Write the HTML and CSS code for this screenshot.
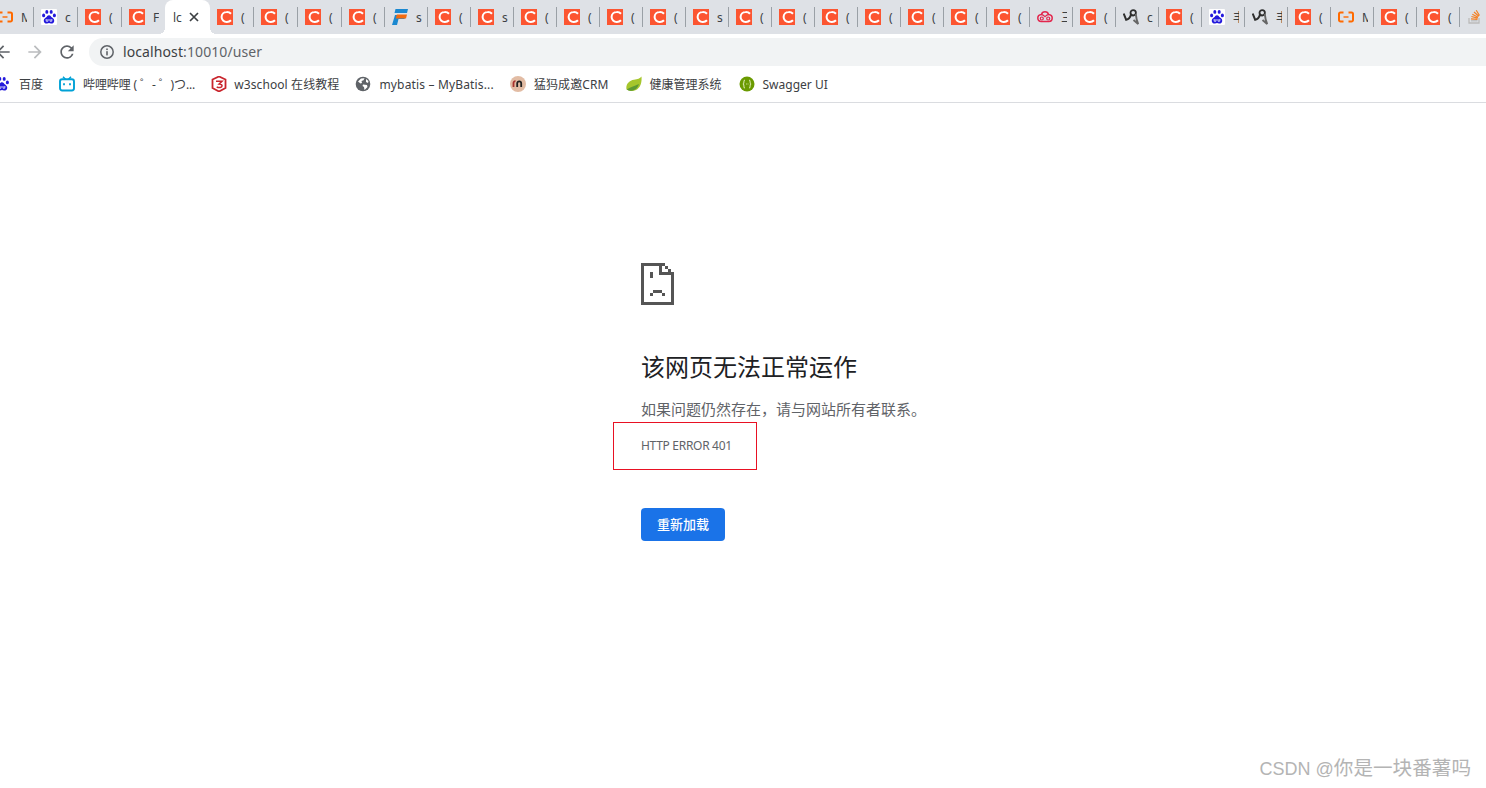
FILE: index.html
```html
<!DOCTYPE html>
<html lang="zh-CN">
<head>
    <meta charset="UTF-8">
    <title>localhost:10010/user</title>
    <link rel="stylesheet" href="styles.css">
</head>
<body>

    <!-- Shared favicons -->
    <svg class="icon-defs" aria-hidden="true">
        <symbol id="i-csdn" viewBox="0 0 16 16">
            <rect width="16" height="16" fill="#fc5531"/>
            <path d="M14 4.800A5.600 5.600 0 0 0 9.600 3a5 5 0 1 0 0 10 5.600 5.600 0 0 0 4.400-1.800" fill="none" stroke="#fff" stroke-width="2"/>
        </symbol>
        <symbol id="i-baidu" viewBox="0 0 16 16">
            <rect width="16" height="16" rx="1" fill="#fff"/>
            <g fill="#2319dc">
                <ellipse cx="5.800" cy="2.900" rx="1.500" ry="1.900"/>
                <ellipse cx="10.200" cy="2.900" rx="1.500" ry="1.900"/>
                <ellipse cx="2.600" cy="6.400" rx="1.500" ry="1.900"/>
                <ellipse cx="13.400" cy="6.400" rx="1.500" ry="1.900"/>
                <path d="M8 6.200c1.500 0 2 1.500 3.100 2.400 1.300 1 2.400 2 2.100 3.600-.3 1.700-1.700 2.500-3.200 2.300-.8-.1-1.300-.4-2-.4s-1.200.3-2 .4c-1.500.2-2.900-.6-3.200-2.300-.3-1.600.8-2.600 2.100-3.600C5.900 7.700 6.500 6.200 8 6.200z"/>
            </g>
            <path d="M5.200 10v2.200h1.800V10M9 10v2.200h1.800V10" fill="none" stroke="#fff" stroke-width=".8"/>
        </symbol>
        <symbol id="i-ali" viewBox="0 0 16 16">
            <path d="M5.500 3.500H2.500A1.500 1.500 0 0 0 1 5v6a1.500 1.500 0 0 0 1.500 1.500h3M10.500 3.500h3A1.500 1.500 0 0 1 15 5v6a1.500 1.500 0 0 1-1.500 1.500h-3" fill="none" stroke="#ff6a00" stroke-width="2"/>
            <rect x="5.500" y="7.300" width="5" height="1.400" fill="#ff6a00"/>
        </symbol>
        <symbol id="i-fast" viewBox="0 0 16 16">
            <path d="M3.500 0H16l-1 4H2.500z" fill="#1b88d0"/>
            <path d="M3 6h10.500l-1 4H6.500L5 16H0z" fill="#1b88d0"/>
            <path d="M4.800 5.500H15l-1 4H3.800z" fill="#f26b10"/>
        </symbol>
        <symbol id="i-cloud" viewBox="0 0 16 16">
            <path d="M4.500 5.500a3.600 3.600 0 0 1 7 0c2 .2 3.700 1.300 3.700 3.500 0 2.300-1.500 3.500-3.400 3.500H4.200C2.300 12.500.8 11.300.8 9c0-2.200 1.700-3.300 3.700-3.500z" fill="none" stroke="#e2264d" stroke-width="1.500"/>
            <path d="M4.500 5.700c1.500 0 2.500 1 3.500 2 1-1 2-2 3.500-2" fill="none" stroke="#e2264d" stroke-width="1.200"/>
            <circle cx="4.800" cy="9.500" r="1.500" fill="none" stroke="#e2264d" stroke-width="1.200"/>
            <circle cx="11.200" cy="9.500" r="1.500" fill="none" stroke="#e2264d" stroke-width="1.200"/>
        </symbol>
        <symbol id="i-scribble" viewBox="0 0 16 16">
            <path d="M.7 4.500 3.200 10.800c2.700-.5 4.300-3 5-6" fill="none" stroke="#2e2e2e" stroke-width="2"/>
            <circle cx="10.200" cy="3.800" r="2.700" fill="none" stroke="#2e2e2e" stroke-width="1.800"/>
            <path d="M12.800 5c.3 3.300.8 6.500 2.400 10L10.500 11" fill="none" stroke="#666" stroke-width="1.900"/>
        </symbol>
        <symbol id="i-stack" viewBox="0 0 16 16">
            <path d="M2 9v5h10V9" fill="none" stroke="#bcbbbb" stroke-width="1.300"/>
            <path d="M4 11.800h6.500" stroke="#bcbbbb" stroke-width="1.200"/>
            <path d="M4 9.800l6.500.6M4.400 7.500l6.300 1.700M5.300 5.200l5.800 3M7 3l4.800 4.300M9.200 1.200l3.300 5.300" stroke="#f48024" stroke-width="1.200" fill="none"/>
        </symbol>
    </svg>

    <!-- Browser chrome -->
    <header class="browser">
        <div class="tabstrip">
            <div class="tab tab-wide"><svg class="favicon"><use href="#i-ali"/></svg><span class="tab-title">M</span></div>
            <div class="tab tab-wide"><svg class="favicon"><use href="#i-baidu"/></svg><span class="tab-title">c</span></div>
            <div class="tab tab-wide"><svg class="favicon"><use href="#i-csdn"/></svg><span class="tab-title">(</span></div>
            <div class="tab tab-wide tab-nosep"><svg class="favicon"><use href="#i-csdn"/></svg><span class="tab-title">F</span></div>
            <div class="tab tab-active"><span class="tab-title">lc</span><svg class="tab-close" viewBox="0 0 10 10"><path d="M1 1l8 8M9 1l-8 8"/></svg></div>
            <div class="tab tab-wide"><svg class="favicon"><use href="#i-csdn"/></svg><span class="tab-title">(</span></div>
            <div class="tab tab-wide"><svg class="favicon"><use href="#i-csdn"/></svg><span class="tab-title">(</span></div>
            <div class="tab tab-wide"><svg class="favicon"><use href="#i-csdn"/></svg><span class="tab-title">(</span></div>
            <div class="tab"><svg class="favicon"><use href="#i-csdn"/></svg><span class="tab-title">(</span></div>
            <div class="tab"><svg class="favicon"><use href="#i-fast"/></svg><span class="tab-title">s</span></div>
            <div class="tab"><svg class="favicon"><use href="#i-csdn"/></svg><span class="tab-title">(</span></div>
            <div class="tab"><svg class="favicon"><use href="#i-csdn"/></svg><span class="tab-title">s</span></div>
            <div class="tab"><svg class="favicon"><use href="#i-csdn"/></svg><span class="tab-title">(</span></div>
            <div class="tab"><svg class="favicon"><use href="#i-csdn"/></svg><span class="tab-title">(</span></div>
            <div class="tab"><svg class="favicon"><use href="#i-csdn"/></svg><span class="tab-title">(</span></div>
            <div class="tab"><svg class="favicon"><use href="#i-csdn"/></svg><span class="tab-title">(</span></div>
            <div class="tab"><svg class="favicon"><use href="#i-csdn"/></svg><span class="tab-title">s</span></div>
            <div class="tab"><svg class="favicon"><use href="#i-csdn"/></svg><span class="tab-title">(</span></div>
            <div class="tab"><svg class="favicon"><use href="#i-csdn"/></svg><span class="tab-title">(</span></div>
            <div class="tab"><svg class="favicon"><use href="#i-csdn"/></svg><span class="tab-title">(</span></div>
            <div class="tab"><svg class="favicon"><use href="#i-csdn"/></svg><span class="tab-title">(</span></div>
            <div class="tab"><svg class="favicon"><use href="#i-csdn"/></svg><span class="tab-title">(</span></div>
            <div class="tab"><svg class="favicon"><use href="#i-csdn"/></svg><span class="tab-title">(</span></div>
            <div class="tab"><svg class="favicon"><use href="#i-csdn"/></svg><span class="tab-title">(</span></div>
            <div class="tab"><svg class="favicon"><use href="#i-cloud"/></svg><span class="tab-title">三</span></div>
            <div class="tab"><svg class="favicon"><use href="#i-csdn"/></svg><span class="tab-title">(</span></div>
            <div class="tab"><svg class="favicon"><use href="#i-scribble"/></svg><span class="tab-title">c</span></div>
            <div class="tab"><svg class="favicon"><use href="#i-csdn"/></svg><span class="tab-title">(</span></div>
            <div class="tab"><svg class="favicon"><use href="#i-baidu"/></svg><span class="tab-title">丰</span></div>
            <div class="tab"><svg class="favicon"><use href="#i-scribble"/></svg><span class="tab-title">丰</span></div>
            <div class="tab"><svg class="favicon"><use href="#i-csdn"/></svg><span class="tab-title">(</span></div>
            <div class="tab"><svg class="favicon"><use href="#i-ali"/></svg><span class="tab-title">M</span></div>
            <div class="tab"><svg class="favicon"><use href="#i-csdn"/></svg><span class="tab-title">(</span></div>
            <div class="tab"><svg class="favicon"><use href="#i-csdn"/></svg><span class="tab-title">(</span></div>
            <div class="tab tab-nosep"><svg class="favicon"><use href="#i-stack"/></svg></div>
        </div>

        <div class="toolbar">
            <div class="nav-btn">
                <svg viewBox="0 0 24 24" class="nav-icon"><path d="M20 11H7.830l5.590-5.590L12 4l-8 8 8 8 1.410-1.410L7.830 13H20v-2z"/></svg>
            </div>
            <div class="nav-btn nav-off">
                <svg viewBox="0 0 24 24" class="nav-icon"><path d="M4 11h12.170l-5.590-5.590L12 4l8 8-8 8-1.410-1.410L16.170 13H4v-2z"/></svg>
            </div>
            <div class="nav-btn">
                <svg viewBox="0 0 24 24" class="nav-icon"><path d="M17.650 6.350A7.958 7.958 0 0 0 12 4c-4.420 0-7.990 3.580-7.990 8s3.570 8 7.990 8c3.730 0 6.840-2.550 7.730-6h-2.080A5.990 5.990 0 0 1 12 18c-3.310 0-6-2.690-6-6s2.690-6 6-6c1.660 0 3.140.690 4.220 1.780L13 11h7V4l-2.350 2.350z"/></svg>
            </div>
            <div class="omnibox">
                <svg class="info-icon" viewBox="0 0 14 14">
                    <circle cx="7" cy="7" r="6.200" fill="none" stroke="#5f6368" stroke-width="1.500"/>
                    <rect x="6.200" y="6.200" width="1.600" height="4.200" fill="#5f6368"/>
                    <rect x="6.200" y="3.500" width="1.600" height="1.600" fill="#5f6368"/>
                </svg>
                <span class="url"><span class="url-host">localhost</span>:10010/user</span>
            </div>
        </div>

        <nav class="bookmarks">
            <a class="bookmark bm-first"><svg class="favicon"><use href="#i-baidu"/></svg>百度</a>
            <a class="bookmark bm-bili">
                <svg class="favicon" viewBox="0 0 16 16">
                    <path d="M4 .8l2.500 2.400M12 .8L9.500 3.200" stroke="#00a1d6" stroke-width="1.500" fill="none"/>
                    <rect x="1" y="3.300" width="14" height="11.200" rx="2.200" fill="none" stroke="#00a1d6" stroke-width="1.900"/>
                    <path d="M5 7.300v2M11 7.300v2" stroke="#00a1d6" stroke-width="1.800"/>
                </svg>哔哩哔哩 ( ゜- ゜)つ...</a>
            <a class="bookmark bm-w3">
                <svg class="favicon" viewBox="0 0 16 16">
                    <path d="M8 .5l6.500 3v8.500L8 15.500 1.500 12V3.500z" fill="none" stroke="#c9252d" stroke-width="1.800"/>
                    <path d="M5 5.200h6L8.200 8c2 0 3 .8 2.800 2-.2 1.500-2.800 2-5.300.9" fill="none" stroke="#c9252d" stroke-width="1.600"/>
                </svg>w3school 在线教程</a>
            <a class="bookmark bm-mybatis">
                <svg class="favicon" viewBox="0 0 16 16">
                    <circle cx="8" cy="8" r="7.300" fill="#5f6368"/>
                    <path d="M3 5.500l3-3 3.500-.3-1 2-2 .8.500 2-1.500.5zM8 8.500l4 .5.500 2-3 3-.5-3-1.500-1zM11 3l2.500 2-.5 2-2-1z" fill="#fff"/>
                </svg>mybatis – MyBatis...</a>
            <a class="bookmark bm-crm">
                <svg class="favicon" viewBox="0 0 16 16">
                    <circle cx="8" cy="8" r="8" fill="#e2bca4"/>
                    <path d="M3.500 11V7a1.800 1.800 0 0 1 2-1.800" fill="none" stroke="#a8322e" stroke-width="1.800"/>
                    <path d="M7.200 11V7.300a2 2 0 0 1 4 0V11" fill="none" stroke="#222" stroke-width="1.800"/>
                </svg>猛犸成邀CRM</a>
            <a class="bookmark bm-health">
                <svg class="favicon" viewBox="0 0 16 16">
                    <path d="M15.500.5c.5 6-1 11-5.500 13.500-3.500 1.700-7 1-9.500-.5C-.5 8.500 3 4.500 8 3.800c3.500-.5 6-1.300 7.500-3.300z" fill="#a6c62c"/>
                    <path d="M.8 13.500C4 11 8 10.500 13 8c-1 3.500-3 5.500-6 6.500-2.500.6-4.500.3-6.200-1z" fill="#5d9a33"/>
                </svg>健康管理系统</a>
            <a class="bookmark">
                <svg class="favicon" viewBox="0 0 16 16">
                    <circle cx="8" cy="8" r="7.500" fill="#6a9a00"/>
                    <path d="M6 4C4.500 4 5 6 4.800 7 4.700 7.600 4.300 8 3.800 8c.5 0 .9.400 1 1C5 10 4.500 12 6 12M10 4c1.500 0 1 2 1.200 3 .1.600.5 1 1 1-.5 0-.9.400-1 1-.2 1 .3 3-1.200 3" fill="none" stroke="#d7e6a8" stroke-width="1.100"/>
                    <path d="M7 8h.8M8.600 8h.8" stroke="#d7e6a8" stroke-width="1.100"/>
                </svg>Swagger UI</a>
        </nav>
    </header>

    <!-- Error page -->
    <main class="error-page">
        <svg class="sad-page" viewBox="0 0 11 14" shape-rendering="crispEdges" aria-hidden="true">
            <g fill="#555">
                <rect x="0" y="0" width="7" height="1"/>
                <rect x="0" y="0" width="1" height="14"/>
                <rect x="0" y="13" width="11" height="1"/>
                <rect x="10" y="3" width="1" height="11"/>
                <rect x="6" y="0" width="1" height="4"/>
                <rect x="6" y="3" width="5" height="1"/>
                <rect x="7" y="0" width="1" height="1"/>
                <rect x="8" y="1" width="1" height="1"/>
                <rect x="9" y="2" width="1" height="1"/>
                <rect x="3" y="3" width="1" height="2"/>
                <rect x="4" y="9" width="3" height="1"/>
                <rect x="3" y="10" width="1" height="1"/>
                <rect x="7" y="10" width="1" height="1"/>
            </g>
        </svg>
        <h1 class="error-title">该网页无法正常运作</h1>
        <p class="error-text">如果问题仍然存在，请与网站所有者联系。</p>
        <div class="error-code">HTTP ERROR 401<div class="mark-box"></div></div>
        <button class="reload-btn">重新加载</button>
    </main>

    <div class="watermark">CSDN @<span class="watermark-name">你是一块番薯吗</span></div>

</body>
</html>
```

FILE: styles.css
```css
/* General */
html, body {
    height: 100%;
}

body {
    margin: 0;
    position: relative;
    overflow: hidden;
    background: #fff;
    font-family: "Noto Sans", "Noto Sans CJK SC", sans-serif;
    color: #202124;
}

.icon-defs {
    display: none;
}

.favicon {
    width: 16px;
    height: 16px;
    flex: none;
}

/* Tabs */
.tabstrip {
    display: flex;
    height: 34px;
    margin-left: -10px;
    background: #dee1e6;
    width: 1510px;
}

.tab {
    position: relative;
    flex: 0 0 43px;
    display: flex;
    align-items: center;
    gap: 8px;
    box-sizing: border-box;
    padding-left: 7px;
    height: 34px;
    font-size: 12px;
    color: #3c4043;
}

.tab-wide {
    flex-basis: 44px;
}

.tab::after {
    content: "";
    position: absolute;
    right: 0;
    top: 7px;
    width: 1px;
    height: 20px;
    background: #9aa0a6;
}

.tab-nosep::after,
.tab-active::after {
    display: none;
}

.tab-title {
    width: 6px;
    overflow: hidden;
    white-space: nowrap;
    flex: none;
}

.tab-active {
    flex-basis: 45px;
    margin-left: -1px;
    padding-left: 8px;
    gap: 5px;
    background: #fff;
    border-radius: 8px 8px 0 0;
}

.tab-active .tab-title {
    width: 11px;
}

.tab-active::before {
    content: "";
    position: absolute;
    left: -6px;
    right: -6px;
    bottom: 0;
    height: 6px;
    background:
        radial-gradient(circle at 0 0, transparent 6px, #fff 6px) left bottom / 6px 6px no-repeat,
        radial-gradient(circle at 100% 0, transparent 6px, #fff 6px) right bottom / 6px 6px no-repeat;
}

.tab-close {
    width: 10px;
    height: 10px;
    flex: none;
    fill: none;
    stroke: #3c4043;
    stroke-width: 1.7;
}

/* Toolbar */
.toolbar {
    display: flex;
    align-items: center;
    height: 28px;
    padding-top: 4px;
    margin-left: -13px;
}

.nav-btn {
    flex: 0 0 32px;
    display: flex;
    justify-content: center;
    fill: #5f6368;
}

.nav-off {
    fill: #babcbe;
}

.nav-icon {
    width: 20px;
    height: 20px;
}

.omnibox {
    flex: 1;
    display: flex;
    align-items: center;
    gap: 9px;
    height: 28px;
    margin-left: 6px;
    padding-left: 11px;
    background: #f1f3f4;
    border-radius: 14px 0 0 14px;
}

.info-icon {
    width: 14px;
    height: 14px;
    flex: none;
}

.url {
    margin-top: -1px;
    font-size: 14px;
    letter-spacing: .1px;
    color: #5f6368;
    white-space: nowrap;
}

.url-host {
    color: #3c4043;
}

/* Bookmarks */
.bookmarks {
    display: flex;
    align-items: center;
    gap: 16px;
    height: 36px;
    border-bottom: 1px solid #dadce0;
    padding-left: 59px;
}

.bookmark {
    display: flex;
    align-items: center;
    gap: 8px;
    font-size: 12px;
    color: #3c4043;
    white-space: nowrap;
}

/* Widths nudged so each bookmark lands where the bar puts it */
.bm-first {
    margin-left: -65px;
    gap: 9px;
}

.bm-bili {
    letter-spacing: -.12px;
}

.bm-w3 {
    gap: 7px;
    letter-spacing: .1px;
}

.bm-mybatis {
    letter-spacing: .16px;
}

.bm-crm {
    letter-spacing: .1px;
    margin-right: 1px;
}

.bm-health {
    margin-right: 1px;
}

/* Error page */
.error-page {
    padding: 160px 0 0 641px;
}

.sad-page {
    display: block;
    width: 33px;
    height: 42px;
}

.error-title {
    margin: 45px 0 0;
    font-size: 24px;
    font-weight: 400;
    line-height: 33px;
    color: #202124;
}

.error-text {
    margin: 14px 0 0;
    font-size: 15px;
    line-height: 24px;
    color: #5f6368;
}

.error-code {
    position: relative;
    margin-top: 15px;
    font-size: 12px;
    letter-spacing: -.3px;
    line-height: 20px;
    color: #5f6368;
}

.mark-box {
    position: absolute;
    left: -28px;
    top: -14px;
    width: 142px;
    height: 46px;
    border: 1px solid #e81123;
}

.reload-btn {
    display: block;
    margin-top: 52px;
    width: 84px;
    height: 33px;
    padding: 0 0 3px;
    border: none;
    border-radius: 4px;
    background: #1a73e8;
    color: #fff;
    font-family: inherit;
    font-size: 13px;
    font-weight: 500;
}

/* CSDN watermark */
.watermark {
    position: absolute;
    right: 15px;
    bottom: 7px;
    font-family: "Liberation Sans", "Noto Sans CJK SC", sans-serif;
    font-size: 18px;
    color: #b4b4b4;
    white-space: nowrap;
}

.watermark-name {
    font-size: 19.6px;
}
```
